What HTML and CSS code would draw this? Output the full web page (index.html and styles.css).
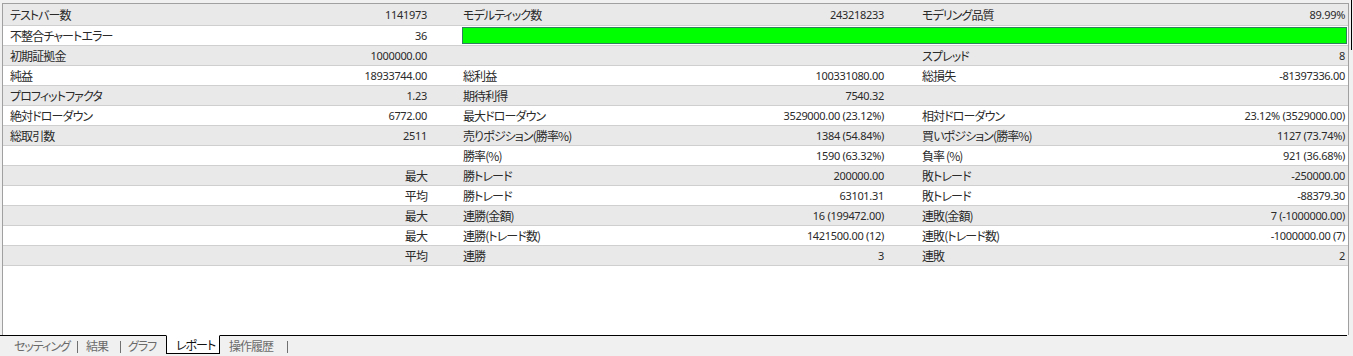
FILE: index.html
```html
<!DOCTYPE html>
<html lang="ja">
<head>
<meta charset="utf-8">
<title>レポート</title>
<link rel="stylesheet" href="styles.css">
</head>
<body>
<div class="window">
  <div class="panel">
    <div class="row alt">
      <div class="sec s1"><span>テストバー数</span><span class="v">1141973</span></div>
      <div class="sec s2"><span>モデルティック数</span><span class="v">243218233</span></div>
      <div class="sec s3"><span>モデリング品質</span><span class="v">89.99%</span></div>
    </div>
    <div class="row">
      <div class="sec s1"><span>不整合チャートエラー</span><span class="v">36</span></div>
      <div class="barcell"><div class="bar"></div></div>
    </div>
    <div class="row alt">
      <div class="sec s1"><span>初期証拠金</span><span class="v">1000000.00</span></div>
      <div class="sec s2"><span></span><span></span></div>
      <div class="sec s3"><span>スプレッド</span><span class="v">8</span></div>
    </div>
    <div class="row">
      <div class="sec s1"><span>純益</span><span class="v">18933744.00</span></div>
      <div class="sec s2"><span>総利益</span><span class="v">100331080.00</span></div>
      <div class="sec s3"><span>総損失</span><span class="v">-81397336.00</span></div>
    </div>
    <div class="row alt">
      <div class="sec s1"><span>プロフィットファクタ</span><span class="v">1.23</span></div>
      <div class="sec s2"><span>期待利得</span><span class="v">7540.32</span></div>
      <div class="sec s3"><span></span><span></span></div>
    </div>
    <div class="row">
      <div class="sec s1"><span>絶対ドローダウン</span><span class="v">6772.00</span></div>
      <div class="sec s2"><span>最大ドローダウン</span><span class="v">3529000.00 (23.12%)</span></div>
      <div class="sec s3"><span>相対ドローダウン</span><span class="v">23.12% (3529000.00)</span></div>
    </div>
    <div class="row alt">
      <div class="sec s1"><span>総取引数</span><span class="v">2511</span></div>
      <div class="sec s2"><span>売りポジション(勝率%)</span><span class="v">1384 (54.84%)</span></div>
      <div class="sec s3"><span>買いポジション(勝率%)</span><span class="v">1127 (73.74%)</span></div>
    </div>
    <div class="row">
      <div class="sec s1"><span></span><span></span></div>
      <div class="sec s2"><span>勝率(%)</span><span class="v">1590 (63.32%)</span></div>
      <div class="sec s3"><span>負率 (%)</span><span class="v">921 (36.68%)</span></div>
    </div>
    <div class="row alt">
      <div class="sec s1"><span></span><span>最大</span></div>
      <div class="sec s2"><span>勝トレード</span><span class="v">200000.00</span></div>
      <div class="sec s3"><span>敗トレード</span><span class="v">-250000.00</span></div>
    </div>
    <div class="row">
      <div class="sec s1"><span></span><span>平均</span></div>
      <div class="sec s2"><span>勝トレード</span><span class="v">63101.31</span></div>
      <div class="sec s3"><span>敗トレード</span><span class="v">-88379.30</span></div>
    </div>
    <div class="row alt">
      <div class="sec s1"><span></span><span>最大</span></div>
      <div class="sec s2"><span>連勝(金額)</span><span class="v">16 (199472.00)</span></div>
      <div class="sec s3"><span>連敗(金額)</span><span class="v">7 (-1000000.00)</span></div>
    </div>
    <div class="row">
      <div class="sec s1"><span></span><span>最大</span></div>
      <div class="sec s2"><span>連勝(トレード数)</span><span class="v">1421500.00 (12)</span></div>
      <div class="sec s3"><span>連敗(トレード数)</span><span class="v">-1000000.00 (7)</span></div>
    </div>
    <div class="row alt">
      <div class="sec s1"><span></span><span>平均</span></div>
      <div class="sec s2"><span>連勝</span><span class="v">3</span></div>
      <div class="sec s3"><span>連敗</span><span class="v">2</span></div>
    </div>
  </div>
  <div class="tabs">
    <span class="tab t1">セッティング</span><span class="sep"></span>
    <span class="tab t2">結果</span><span class="sep"></span>
    <span class="tab t3">グラフ</span>
    <span class="tab active">レポート</span>
    <span class="tab t5">操作履歴</span><span class="sep"></span>
    <span class="fill"></span>
  </div>
</div>
</body>
</html>
```

FILE: styles.css
```css
* { box-sizing: border-box; }
html, body {
  margin: 0;
  padding: 0;
  background: #f0f0f0;
}
body {
  font-family: "Noto Sans CJK JP", "Noto Sans", sans-serif;
  font-size: 12px;
  font-feature-settings: "palt";
  color: #2a2a2a;
  width: 1353px;
  height: 356px;
  overflow: hidden;
}
.window {
  display: flex;
  flex-direction: column;
  height: 356px;
  padding-top: 3px;
  position: relative;
}
.window::after {
  content: "";
  position: absolute;
  right: 1px;
  top: 0;
  width: 1px;
  height: 50px;
  background: #000;
}
.panel {
  height: 332px;
  margin-left: 2px;
  width: 1347px;
  background: #fff;
  border: 1px solid #a0a0a0;
  border-bottom: none;
}
.row {
  display: grid;
  grid-template-columns: 452px 457px 436px;
  height: 20px;
  border-bottom: 1px solid #cfcfcf;
  background: #fff;
  line-height: 19px;
}
.row:first-child { height: 22px; }
.row.alt { background: #e9e9e9; }
.sec {
  display: flex;
  justify-content: space-between;
  align-items: center;
  white-space: nowrap;
  letter-spacing: -0.9px;
}
.sec .v {
  font-family: "Noto Sans", "Noto Sans CJK JP", sans-serif;
  font-size: 11px;
  letter-spacing: -0.3px;
}
.s1 { padding: 0 28px 0 7px; }
.s2 { padding: 0 28px 0 8px; }
.s3 { padding: 0 3px 0 10px; }
.barcell {
  grid-column: 2 / 4;
  padding: 1px 1px 1px 7px;
}
.bar {
  height: 17px;
  background: #00ff00;
  border: 1px solid #2f7f5f;
}
.tabs {
  display: flex;
  align-items: flex-start;
  height: 21px;
  color: #6a6a6a;
  letter-spacing: -1px;
}
.tab, .sep, .fill {
  border-top: 1px solid #000;
  height: 20px;
}
.tab {
  line-height: 18px;
  padding-top: 1px;
  white-space: nowrap;
}
.t1 { width: 77px; padding-left: 14px; }
.t2 { width: 42px; padding-left: 8px; }
.t3 { width: 45px; padding-left: 7px; }
.t5 { width: 67px; padding-left: 9px; }
.sep {
  width: 1px;
}
.sep::before {
  content: "";
  display: block;
  width: 1px;
  height: 12px;
  margin-top: 5px;
  background: #707070;
}
.active {
  width: 54px;
  color: #111;
  background: #fff;
  border: 1px solid #000;
  border-top-color: #fff;
  height: 19px;
  padding: 0 0 0 9px;
  line-height: 17px;
}
.fill { flex: 1; margin-right: 6px; }
```
